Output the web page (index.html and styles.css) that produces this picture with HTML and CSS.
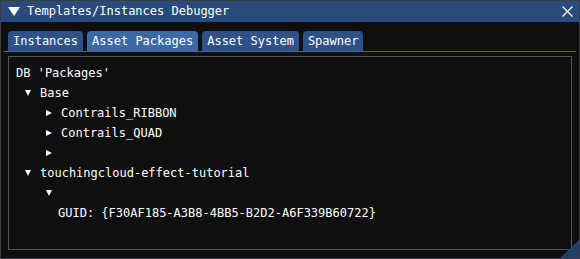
FILE: index.html
```html
<!DOCTYPE html>
<html lang="en">
    <head>
        <meta charset="UTF-8">
        <title>Templates/Instances Debugger</title>
        <link rel="stylesheet" href="styles.css">
    </head>
    <body>
        <div class="window">
            <div class="titlebar">
                <svg class="collapse" width="12" height="10" viewBox="0 0 12 10"><polygon points="0,0 12,0 6,9" fill="#fff"/></svg>
                <span class="title">Templates/Instances Debugger</span>
                <svg class="close" width="11" height="11" viewBox="0 0 11 11"><path d="M0.5 0.5 L10.5 10.5 M10.5 0.5 L0.5 10.5" stroke="#fff" stroke-width="1.3"/></svg>
            </div>

            <div class="content">
                <div class="tabs">
                    <div class="tab">Instances</div>
                    <div class="tab active">Asset Packages</div>
                    <div class="tab">Asset System</div>
                    <div class="tab">Spawner</div>
                </div>
                <div class="tab-line"></div>

                <!-- packages tree -->
                <div class="child">
                    <div class="row">DB 'Packages'</div>
                    <div class="row d1"><span class="arrow down"></span>Base</div>
                    <div class="row d2"><span class="arrow right"></span>Contrails_RIBBON</div>
                    <div class="row d2"><span class="arrow right"></span>Contrails_QUAD</div>
                    <div class="row d2"><span class="arrow right"></span></div>
                    <div class="row d1"><span class="arrow down"></span>touchingcloud-effect-tutorial</div>
                    <div class="row d2"><span class="arrow down"></span></div>
                    <div class="row d3">GUID: {F30AF185-A3B8-4BB5-B2D2-A6F339B60722}</div>
                </div>
            </div>
            <div class="grip"></div>
        </div>
    </body>
</html>
```

FILE: styles.css
```css
*{
    margin: 0;
    padding: 0;
    box-sizing: border-box;
}
body{
    background-color: #0f0f0f;
    font-family: "DejaVu Sans Mono", "Liberation Mono", monospace;
    font-size: 12px;
    color: #ffffff;
}
.window{
    position: relative;
    width: 580px;
    height: 259px;
    border: 1px solid #3c3c44;
    background-color: #0f0f0f;
    overflow: hidden;
}
.titlebar{
    height: 21px;
    background-color: #294a7a;
    display: flex;
    align-items: center;
    padding: 0 6px 0 7px;
}
.collapse{
    margin-right: 7px;
}
.title{
    flex: 1;
    line-height: 21px;
}
.close{
    margin-top: 0px;
}

.content{
    padding: 9px 7px 0 7px;
}
.tabs{
    display: flex;
    gap: 4px;
    height: 20px;
}
.tab{
    padding: 0 5px;
    line-height: 20px;
    background-color: #2e5188;
    border-radius: 4px 4px 0 0;
}
.tab.active{
    background-color: #3a69a6;
}
.tab-line{
    height: 1px;
    margin: 0 -4px;
    background-color: #3a69a6;
}
.child{
    margin-top: 4px;
    width: 564px;
    height: 194px;
    border: 1px solid #56565f;
    padding: 6px 7px 0 7px;
}
.row{
    display: flex;
    align-items: center;
    height: 20px;
    white-space: pre;
}
.d1{
    padding-left: 9px;
}
.d2{
    padding-left: 30px;
}
.d3{
    padding-left: 42px;
}
.arrow{
    width: 15px;
    height: 7px;
    flex: none;
    position: relative;
}
.arrow::before{
    content: "";
    display: block;
    width: 0;
    height: 0;
}
.arrow.down::before{
    border-left: 3.5px solid transparent;
    border-right: 3.5px solid transparent;
    border-top: 6px solid #ffffff;
    margin-top: 0px;
}
.arrow.right::before{
    border-top: 3.5px solid transparent;
    border-bottom: 3.5px solid transparent;
    border-left: 6px solid #ffffff;
}
.grip{
    position: absolute;
    right: 0;
    bottom: 0;
    width: 0;
    height: 0;
    border-left: 19px solid transparent;
    border-bottom: 18px solid #223f68;
}
```
